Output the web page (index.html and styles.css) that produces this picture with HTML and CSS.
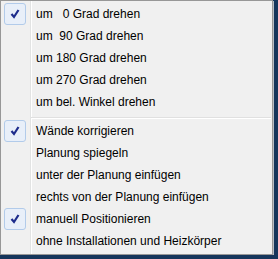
FILE: index.html
```html
<!DOCTYPE html>
<html lang="de">
<head>
    <meta charset="UTF-8">
    <title>Kontextmenü</title>
    <link rel="stylesheet" href="styles.css">
</head>
<body>
    <div class="menu">
        <div class="menu-item checked">
            <div class="gutter">
                <svg class="check" width="22" height="22" viewBox="0 0 22 22"><path d="M7.5 11 L10 14 L14.5 7" /></svg>
            </div>
            <div class="label">um   0 Grad drehen</div>
        </div>
        <div class="menu-item">
            <div class="gutter"></div>
            <div class="label">um  90 Grad drehen</div>
        </div>
        <div class="menu-item">
            <div class="gutter"></div>
            <div class="label">um 180 Grad drehen</div>
        </div>
        <div class="menu-item">
            <div class="gutter"></div>
            <div class="label">um 270 Grad drehen</div>
        </div>
        <div class="menu-item">
            <div class="gutter"></div>
            <div class="label">um bel. Winkel drehen</div>
        </div>

        <div class="separator"></div>

        <div class="menu-item checked">
            <div class="gutter">
                <svg class="check" width="22" height="22" viewBox="0 0 22 22"><path d="M7.5 11 L10 14 L14.5 7" /></svg>
            </div>
            <div class="label">Wände korrigieren</div>
        </div>
        <div class="menu-item">
            <div class="gutter"></div>
            <div class="label">Planung spiegeln</div>
        </div>
        <div class="menu-item">
            <div class="gutter"></div>
            <div class="label">unter der Planung einfügen</div>
        </div>
        <div class="menu-item">
            <div class="gutter"></div>
            <div class="label">rechts von der Planung einfügen</div>
        </div>
        <div class="menu-item checked">
            <div class="gutter">
                <svg class="check" width="22" height="22" viewBox="0 0 22 22"><path d="M7.5 11 L10 14 L14.5 7" /></svg>
            </div>
            <div class="label">manuell Positionieren</div>
        </div>
        <div class="menu-item">
            <div class="gutter"></div>
            <div class="label">ohne Installationen und Heizkörper</div>
        </div>
    </div>
</body>
</html>
```

FILE: styles.css
```css
body {
    margin: 0;
    padding: 0;
    background: #15355b;
    font-family: 'Liberation Sans', Arial, sans-serif;
    font-size: 12px;
    color: #000;
}

.menu {
    width: 271px;
    padding: 2px 0;
    border: 1px solid #979797;
    box-shadow: 1px 1px 0 #b9bec6;
    background: linear-gradient(to right,
        #f0f0f0 29px,
        #e2e3e3 29px, #e2e3e3 30px,
        #ffffff 30px, #ffffff 31px,
        #f0f0f0 31px);
}

.menu-item {
    display: flex;
    align-items: center;
    height: 22px;
    padding-left: 3px;
}

.gutter {
    width: 22px;
    height: 22px;
    flex-shrink: 0;
    box-sizing: border-box;
    border-radius: 3px;
}

.menu-item.checked .gutter {
    border: 1px solid #b2cbea;
    background: #e8eff9;
}

.check {
    display: block;
    margin: -1px;
}

.check path {
    fill: none;
    stroke: #1d2c8c;
    stroke-width: 2.2;
}

.label {
    margin-left: 10px;
    white-space: pre;
    line-height: 22px;
}

.separator {
    height: 7px;
    margin-left: 30px;
    margin-right: 1px;
    background: linear-gradient(to bottom,
        transparent 4px,
        #e0e0e0 4px, #e0e0e0 5px,
        #ffffff 5px, #ffffff 6px,
        transparent 6px);
}
```
